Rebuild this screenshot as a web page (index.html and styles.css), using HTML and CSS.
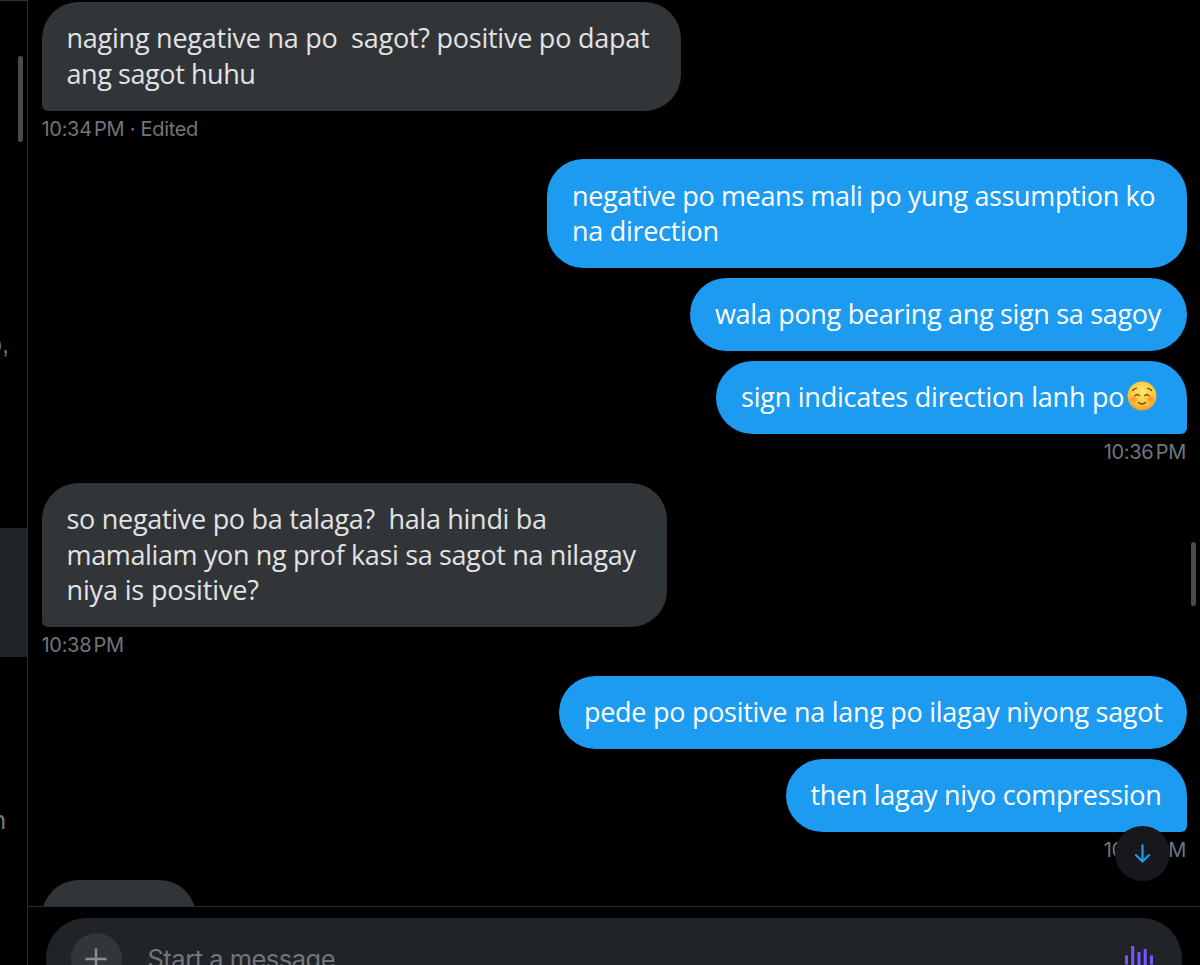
FILE: index.html
```html
<!DOCTYPE html>
<html lang="tl">
<head>
<meta charset="utf-8">
<title>Messages</title>
<link rel="stylesheet" href="styles.css">
</head>
<body>
<div class="app">
  <aside class="inbox">
    <div class="inbox-top"></div>
    <div class="inbox-item item-a"><span>o,</span></div>
    <div class="inbox-item selected"></div>
    <div class="inbox-item item-b"><span>n</span></div>
    <div class="thumb thumb-left"></div>
  </aside>
  <main class="chat">
    <section class="thread">
      <div class="group received">
        <div class="bubble tail w1"><p class="t1">naging negative na po&nbsp; sagot? positive po dapat</p><p class="t2">ang sagot huhu</p></div>
        <div class="time"><span>10:34 PM</span> · Edited</div>
      </div>
      <div class="group sent">
        <div class="bubble w2"><p class="t3">negative po means mali po yung assumption ko</p><p class="t4">na direction</p></div>
        <div class="bubble w3"><p class="t5">wala pong bearing ang sign sa sagoy</p></div>
        <div class="bubble tail w4"><p class="t6">sign indicates direction lanh po</p>
          <svg class="emoji" viewBox="0 0 30 30">
            <defs><radialGradient id="face" cx=".5" cy=".35" r=".65"><stop offset="0" stop-color="#ffe46a"/><stop offset=".65" stop-color="#fcc83c"/><stop offset="1" stop-color="#f39a25"/></radialGradient>
            <radialGradient id="blush"><stop offset="0" stop-color="#f4702c" stop-opacity=".75"/><stop offset="1" stop-color="#f4702c" stop-opacity="0"/></radialGradient></defs>
            <circle cx="15" cy="15" r="14.5" fill="url(#face)"/>
            <ellipse cx="6.5" cy="18" rx="5" ry="4" fill="url(#blush)"/><ellipse cx="23.5" cy="18" rx="5" ry="4" fill="url(#blush)"/>
            <g fill="none" stroke="#7b4312" stroke-width="1.3" stroke-linecap="round"><path d="M5.500 9.500q1.500-2 4-2.200M24.500 9.500q-1.500-2-4-2.200M8 14.800q2.200-2.600 4.400 0M17.600 14.800q2.200-2.600 4.400 0"/><path d="M11.500 21.500q3.500 2.800 7 0" stroke-width="1.600"/></g>
          </svg>
        </div>
        <div class="time"><span>10:36 PM</span></div>
      </div>
      <div class="group received">
        <div class="bubble tail w5"><p class="t7">so negative po ba talaga?&nbsp; hala hindi ba</p><p class="t8">mamaliam yon ng prof kasi sa sagot na nilagay</p><p class="t9">niya is positive?</p></div>
        <div class="time"><span>10:38 PM</span></div>
      </div>
      <div class="group sent">
        <div class="bubble w6"><p class="t10">pede po positive na lang po ilagay niyong sagot</p></div>
        <div class="bubble tail w7"><p class="t11">then lagay niyo compression</p></div>
        <div class="time"><span>10:39 PM</span></div>
      </div>
      <div class="group received"><div class="bubble w8"></div></div>
      <div class="thumb thumb-right"></div>
      <div class="jump"><svg viewBox="0 0 20 20"><path d="M9.500 .5V17.500M2.300 10.500L9.500 17.500L16.700 10.500" fill="none" stroke="#1d9bf0" stroke-width="2.200"/></svg></div>
    </section>
    <footer class="composer">
      <div class="field">
        <div class="add"><svg viewBox="0 0 22 22"><path d="M11 .5V21.500M.5 11H21.500" stroke="#8b8f93" stroke-width="2.500"/></svg></div>
        <span class="hint">Start a message</span>
        <svg class="voice" viewBox="0 0 30 38"><path d="M3.500 15.500v9M9.700 6v28M16 12v16M22.200 9v22M28.500 15.500v9" stroke="#7856ff" stroke-width="3"/></svg>
      </div>
    </footer>
  </main>
</div>
</body>
</html>
```
FILE: styles.css
```css
* { box-sizing: border-box; }
body { margin: 0; background: #000; font-family: "Open Sans", sans-serif; }
p { margin: 0; }
svg { display: block; }
.app { display: flex; width: 1200px; height: 965px; overflow: hidden; }
.inbox { position: relative; width: 28px; flex: none; border-right: 1px solid #2a2d30; display: flex; flex-direction: column; overflow: hidden; }
.inbox-top { height: 1px; background: #2f3336; flex: none; }
.inbox-item { flex: none; display: flex; justify-content: flex-start; color: #71767b; font: 25px/30px Inter, sans-serif; }
.item-a { height: 527px; padding-top: 328px; font-family: "Liberation Sans", sans-serif; }
.item-a span { margin-left: -12px; }
.selected { height: 129px; background: #202327; }
.item-b { padding-top: 148px; }
.item-b span { margin-left: -8.500px; }
.thumb { position: absolute; width: 5px; border-radius: 3px; background: #4a4a4a; }
.thumb-left { left: 18px; top: 56px; height: 86px; }
.thumb-right { right: 4px; top: 542px; height: 64px; }
.chat { flex: 1; display: flex; flex-direction: column; min-width: 0; }
.thread { position: relative; height: 906px; flex: none; overflow: hidden; padding: 1.700px 13px 0 13.500px; }
.group { display: flex; flex-direction: column; align-items: flex-start; }
.sent { align-items: flex-end; }
.bubble { display: flex; flex-direction: column; padding: 18.400px 25px 19.300px; border-radius: 36.500px; color: #e1e3e5; background: #323537; font-size: 27px; line-height: 35.600px; white-space: nowrap; margin-bottom: 9.700px; }
.sent .bubble { background: #1d9bf0; color: #fff; }
.bubble.tail { margin-bottom: 0; }
.received .bubble.tail { border-bottom-left-radius: 6px; }
.sent .bubble.tail { border-bottom-right-radius: 6px; }
.w1 { width: 639.500px; }
.w2 { width: 640px; }
.w3 { width: 497px; }
.sent .w4 { width: 471px; flex-direction: row; padding-right: 30px; }
.w5 { width: 625.500px; }
.w6 { width: 628px; }
.w7 { width: 401.500px; }
.w8 { width: 154px; height: 73px; }
.t1 { letter-spacing: -.24px; }
.t2 { letter-spacing: -.42px; }
.t3 { letter-spacing: -.36px; }
.t4 { letter-spacing: -.3px; }
.t5 { letter-spacing: -.31px; }
.t6 { letter-spacing: -.23px; }
.t7 { letter-spacing: -.29px; }
.t8 { letter-spacing: -.36px; }
.t9 { letter-spacing: -.15px; }
.t10 { letter-spacing: -.28px; }
.t11 { letter-spacing: -.31px; }
.emoji { width: 30px; height: 30px; margin: 2px 0 0 auto; flex: none; }
.time { height: 48.600px; padding-top: 3px; font: 20px/30px Inter, sans-serif; letter-spacing: -.3px; color: #71767b; white-space: nowrap; }
.sent .time { padding-right: 1px; }
.time span { word-spacing: -3px; }
.jump { position: absolute; right: 30px; top: 826px; width: 55px; height: 55px; border-radius: 50%; background: #16181c; display: flex; align-items: center; justify-content: center; }
.jump svg { width: 20px; height: 20px; }
.composer { flex: 1; border-top: 1px solid #2a2d30; padding: 11px 18px 0; overflow: hidden; }
.field { height: 81px; border-radius: 40.500px; background: #202327; display: flex; align-items: center; padding: 0 29px 0 24.500px; }
.add { width: 51px; height: 51px; border-radius: 50%; background: #323639; display: flex; align-items: center; justify-content: center; }
.add svg { width: 22px; height: 22px; }
.hint { margin: 1px 0 0 26px; font: 25.500px/32px Inter, sans-serif; letter-spacing: -.5px; color: #71767b; }
.voice { width: 30px; height: 38px; margin-left: auto; }
```
